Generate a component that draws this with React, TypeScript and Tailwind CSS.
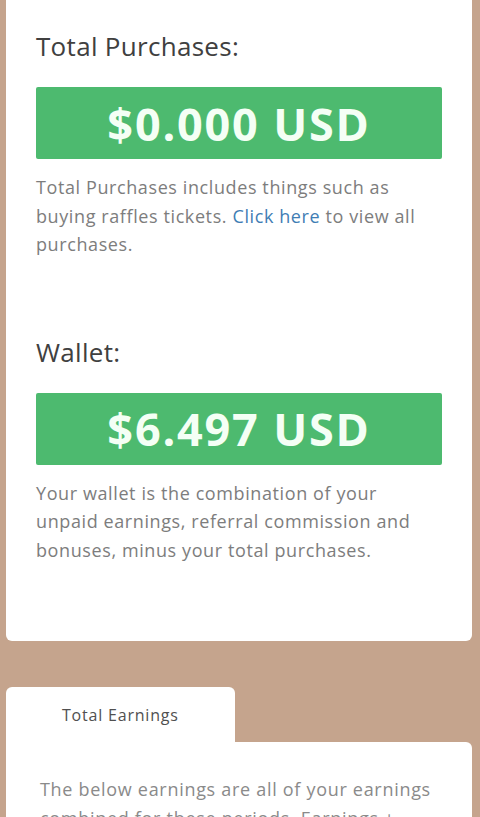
const font = { fontFamily: '"Open Sans", "Liberation Sans", sans-serif' };

function Balance({ title, amount, children }: { title: string; amount: string; children: React.ReactNode }) {
  return (
    <section>
      <h2 className="text-[26px] leading-[36px] tracking-[0.3px] text-[#404040]">{title}</h2>
      <div className="mt-[23px] h-[72px] rounded-[2px] bg-[#4dba6f] flex items-center justify-center">
        <span className="text-[45px] font-bold tracking-[1.8px] text-[#f4fff5] leading-none">{amount}</span>
      </div>
      <p className="mt-[14px] text-[18px] leading-[28.5px] tracking-[0.6px] text-[#7d7d7d]">{children}</p>
    </section>
  );
}

export default function App() {
  return (
    <div className="min-h-[817px] bg-[#c5a48d] pl-[6px] pr-[8px] pb-10 overflow-hidden" style={font}>
      <div className="bg-white rounded-b-[6px] pl-[30px] pr-[30px] pt-[28px] pb-[77px]">
        <Balance title="Total Purchases:" amount="$0.000 USD">
          Total Purchases includes things such as buying raffles tickets.{" "}
          <a href="#" className="text-[#3f7db4]">
            Click here
          </a>{" "}
          to view all purchases.
        </Balance>
        <div className="mt-[75px]">
          <Balance title="Wallet:" amount="$6.497 USD">
            Your wallet is the combination of your unpaid earnings, referral commission and bonuses, minus your total
            purchases.
          </Balance>
        </div>
      </div>

      <div className="mt-[46px]">
        <div className="flex">
          <button className="w-[229px] h-[55px] bg-white rounded-t-[6px] text-[16px] tracking-[0.8px] text-[#505050] pl-[56px] text-left">
            Total Earnings
          </button>
        </div>
        <div className="bg-white rounded-tr-[6px] pl-[34px] pr-[30px] pt-[33px] pb-10">
          <p className="text-[18px] leading-[28.5px] tracking-[0.7px] text-[#8a8a8a]">
            The below earnings are all of your earnings combined for these periods. Earnings + referral commission +
            bonuses.
          </p>
        </div>
      </div>
    </div>
  );
}
